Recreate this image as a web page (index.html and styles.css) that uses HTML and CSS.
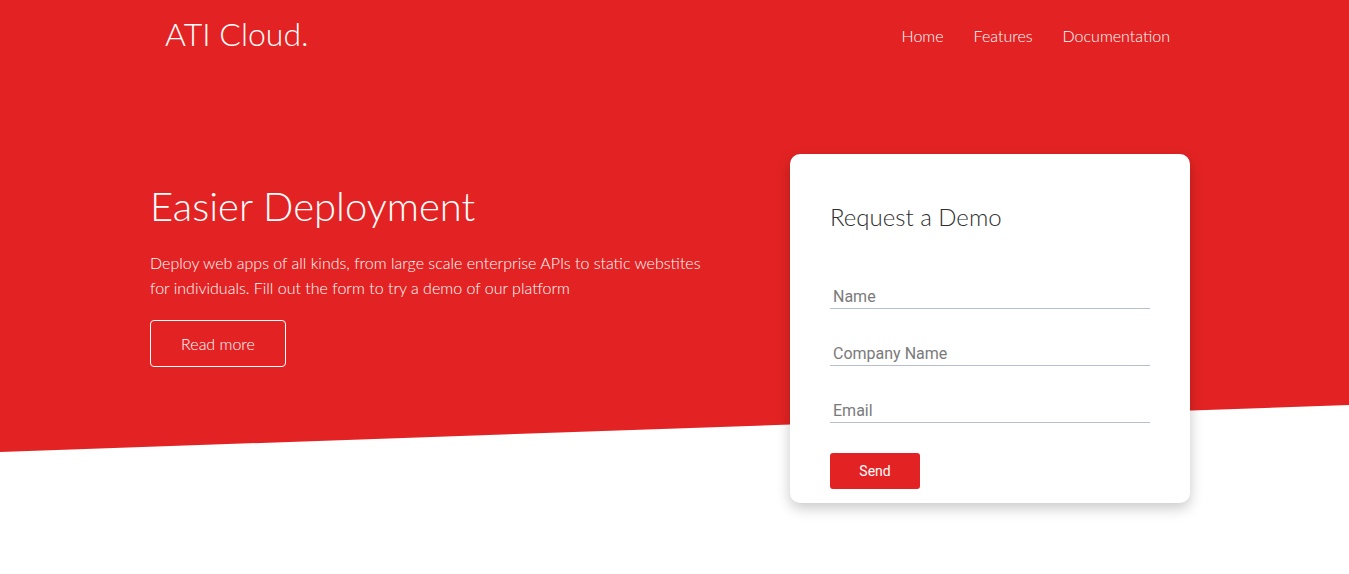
FILE: index.html
```html
<!DOCTYPE html>
<html lang="en">
<head>
<meta charset="utf-8">
<title>ATI Cloud.</title>
<link rel="stylesheet" href="styles.css">
</head>
<body>
<div class="top">
  <header class="container header">
    <div class="logo">ATI Cloud.</div>
    <nav class="nav">
      <a href="#">Home</a>
      <a href="#">Features</a>
      <a href="#">Documentation</a>
    </nav>
  </header>
  <section class="container hero">
    <div class="hero-text">
      <h1>Easier Deployment</h1>
      <p>Deploy web apps of all kinds, from large scale enterprise APIs to static webstites for individuals. Fill out the form to try a demo of our platform</p>
      <a class="btn-outline" href="#">Read more</a>
    </div>
    <form class="card">
      <h3>Request a Demo</h3>
      <input class="field" type="text" placeholder="Name">
      <input class="field" type="text" placeholder="Company Name">
      <input class="field" type="email" placeholder="Email">
      <button class="btn-send" type="button">Send</button>
    </form>
  </section>
</div>
</body>
</html>
```
FILE: styles.css
```css
* { box-sizing: border-box; }
html, body { margin: 0; padding: 0; }
body {
  background: #ffffff;
  font-family: Lato, "Liberation Sans", sans-serif;
  color: #ffffff;
  overflow: hidden;
}
.top {
  position: relative;
  min-height: 574px;
}
.top::before {
  content: "";
  position: absolute;
  left: 0;
  right: 0;
  top: 0;
  height: 452px;
  background: #e32323;
  clip-path: polygon(0 0, 100% 0, 100% 405px, 0 100%);
  z-index: -1;
}
.container {
  width: 1040px;
  margin-left: 150px;
}
.header {
  height: 68px;
  display: flex;
  align-items: center;
  justify-content: space-between;
  padding: 0 20px 0 15px;
}
.logo {
  font-size: 32px;
  font-weight: 300;
  line-height: 1.2;
}
.nav {
  display: flex;
  gap: 30px;
  padding-top: 3px;
}
.nav a {
  color: #ffffff;
  text-decoration: none;
  font-size: 16px;
  font-weight: 300;
}
.hero {
  display: flex;
  justify-content: space-between;
  align-items: flex-start;
  margin-top: 86px;
}
.hero-text {
  width: 560px;
  padding-top: 28px;
}
.hero-text h1 {
  margin: 0;
  font-size: 40px;
  font-weight: 300;
  line-height: 1.2;
}
.hero-text p {
  margin: 20px 0 20px;
  font-size: 16px;
  font-weight: 300;
  line-height: 25px;
}
.btn-outline {
  display: inline-block;
  width: 136px;
  height: 47px;
  border: 1px solid #ffffff;
  border-radius: 4px;
  color: #ffffff;
  text-decoration: none;
  text-align: center;
  font-size: 16px;
  font-weight: 300;
  line-height: 45px;
}
.card {
  width: 400px;
  background: #ffffff;
  border-radius: 10px;
  box-shadow: 0 5px 14px rgba(0, 0, 0, 0.22);
  padding: 49px 40px 14px;
  display: flex;
  flex-direction: column;
  align-items: flex-start;
}
.card h3 {
  margin: 0 0 41px;
  color: #2e2e2e;
  font-size: 24px;
  font-weight: 300;
  line-height: 1.2;
}
.field {
  width: 100%;
  height: 36px;
  margin: 0 0 21px;
  padding: 14px 3px 2px;
  border: 0;
  border-bottom: 1px solid #b6bfcc;
  outline: none;
  background: transparent;
  font-family: Roboto, "Liberation Sans", sans-serif;
  font-size: 16px;
  font-weight: 400;
  color: #333333;
}
.field::placeholder {
  color: #7a7a7a;
  opacity: 1;
}
.field:last-of-type { margin-bottom: 30px; }
.btn-send {
  width: 90px;
  height: 36px;
  border: 0;
  border-radius: 3px;
  background: #e32323;
  color: #ffffff;
  font-family: Roboto, "Liberation Sans", sans-serif;
  font-size: 14px;
  font-weight: 400;
  padding: 0;
}
```
